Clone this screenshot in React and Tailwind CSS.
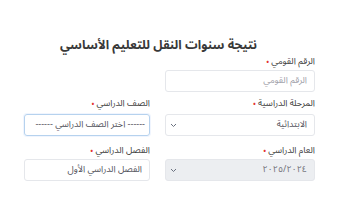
import React from "react";

function Chevron() {
  return (
    <svg width="7" height="5" viewBox="0 0 7 5" className="shrink-0">
      <path d="M1 1l2.5 2.5L6 1" fill="none" stroke="#6b7280" strokeWidth="1" />
    </svg>
  );
}

function Label({ children }) {
  return (
    <div className="h-[14px] text-[9px] leading-[14px] text-[#404040] flex items-center gap-[2px]">
      <span>{children}</span>
      <span className="text-[#e3342f] text-[9px] leading-none">•</span>
    </div>
  );
}

function Box({ children, className = "" }) {
  return (
    <div
      className={`h-[22px] rounded-[3px] border flex items-center justify-between pr-[7px] pl-[4px] text-[9px] ${className}`}
    >
      {children}
    </div>
  );
}

export default function App() {
  return (
    <div
      dir="rtl"
      className="w-[360px] h-[200px] bg-white overflow-hidden"
      style={{ fontFamily: '"Noto Sans Arabic", "DejaVu Sans", sans-serif' }}
    >
      <div className="pt-[36px] pr-[43px] text-center">
        <h1 className="text-[12.5px] leading-[18px] font-bold text-[#383838]">
          نتيجة سنوات النقل للتعليم الأساسي
        </h1>
      </div>

      <div className="mt-[1px] pr-[45px] pl-[24px] grid grid-cols-[150px_126px] gap-x-[15px]">
        <div>
          <Label>الرقم القومي</Label>
          <Box className="mt-[1px] border-[#e5e7eb] text-[#a1a1aa] h-[21px]">الرقم القومي</Box>
        </div>
        <div />

        <div className="mt-[5px]">
          <Label>المرحلة الدراسية</Label>
          <Box className="mt-[3px] border-[#e5e7eb] text-[#52525b]">
            <span>الابتدائية</span>
            <Chevron />
          </Box>
        </div>
        <div className="mt-[5px]">
          <Label>الصف الدراسي</Label>
          <Box className="mt-[3px] border-[#b6d2ee] shadow-[0_0_0_1px_rgba(59,130,246,0.08)] text-[#52525b] !pr-[4px] whitespace-nowrap overflow-hidden">
            <span>------ اختر الصف الدراسي ------</span>
          </Box>
        </div>

        <div className="mt-[8px]">
          <Label>العام الدراسي</Label>
          <Box className="mt-[1px] border-[#e5e7eb] bg-[#eceef1] text-[#71717a]">
            <span dir="ltr">٢٠٢٥/٢٠٢٤</span>
            <Chevron />
          </Box>
        </div>
        <div className="mt-[8px]">
          <Label>الفصل الدراسي</Label>
          <Box className="mt-[1px] border-[#e5e7eb] text-[#52525b]">
            <span>الفصل الدراسي الأول</span>
          </Box>
        </div>
      </div>
    </div>
  );
}
